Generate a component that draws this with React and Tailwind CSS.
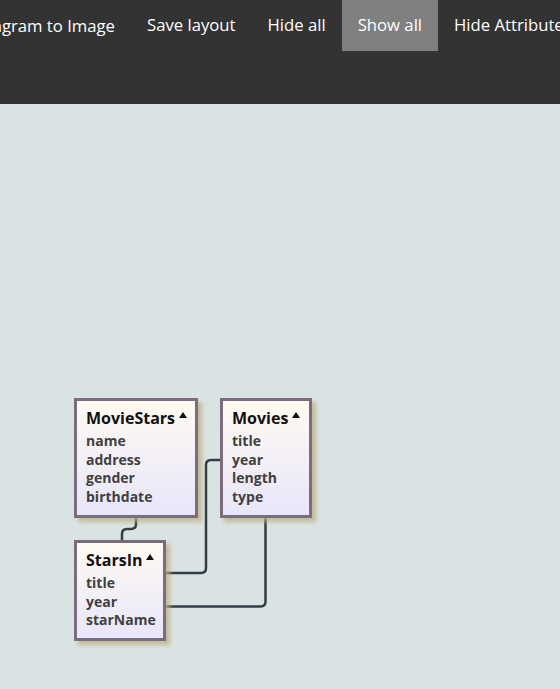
import React from "react";

const font = { fontFamily: '"Open Sans", "Noto Sans", sans-serif' };

function Tri() {
  return (
    <svg width="8" height="6" viewBox="0 0 8 6" className="ml-[4px] mt-[5px] self-start">
      <polygon points="4,0 8,6 0,6" fill="#111" />
    </svg>
  );
}

function Entity({ title, attrs, className }) {
  return (
    <div
      className={`absolute border-[3px] border-[#7b6d7e] bg-linear-to-b from-[#fffaf1] to-[#e8e6fa] shadow-[4px_4px_4px_rgba(185,175,130,0.75)] pl-[9px] pt-[6px] ${className}`}
    >
      <div className="flex items-start">
        <span className="text-[16px] leading-[22px] font-bold text-[#111]">{title}</span>
        <Tri />
      </div>
      <div className="mt-[3px]">
        {attrs.map((a) => (
          <div key={a} className="text-[14px] leading-[18.6px] font-bold text-[#404040]">
            {a}
          </div>
        ))}
      </div>
    </div>
  );
}

export default function App() {
  const items = ["Save layout", "Hide all", "Show all", "Hide Attributes"];
  return (
    <div className="w-[560px] h-[689px] overflow-hidden bg-[#dae3e3]" style={font}>
      <div className="h-[104px] bg-[#333333] flex items-start overflow-hidden">
        <div className="w-[131px] shrink-0 h-[51px] flex items-center justify-end overflow-hidden pr-[16px]">
          <span className="whitespace-nowrap text-[16.7px] text-white">Export Diagram to Image</span>
        </div>
        {items.map((t) => (
          <div
            key={t}
            className={`h-[51px] px-[16px] pb-[1px] flex items-center shrink-0 whitespace-nowrap text-[16.7px] text-white ${
              t === "Show all" ? "bg-[#808080]" : ""
            }`}
          >
            {t}
          </div>
        ))}
      </div>
      <div className="relative h-[585px]">
        <svg
          className="absolute left-0 top-0"
          width="560"
          height="585"
          viewBox="0 104 560 585"
          fill="none"
          stroke="#323e46"
          strokeWidth="2.5"
        >
          <path d="M136 518 V524 Q136 529 131 529 H127 Q122 529 122 534 V541" />
          <path d="M166 573 H201 Q206 573 206 568 V465 Q206 460 211 460 H221" />
          <path d="M166 606.5 H260.5 Q265.5 606.5 265.5 601.5 V517" />
        </svg>
        <Entity
          title="MovieStars"
          attrs={["name", "address", "gender", "birthdate"]}
          className="left-[74px] top-[294px] w-[124px] h-[120px]"
        />
        <Entity
          title="Movies"
          attrs={["title", "year", "length", "type"]}
          className="left-[220px] top-[294px] w-[92px] h-[120px]"
        />
        <Entity
          title="StarsIn"
          attrs={["title", "year", "starName"]}
          className="left-[74px] top-[436px] w-[92px] h-[101px]"
        />
      </div>
    </div>
  );
}
